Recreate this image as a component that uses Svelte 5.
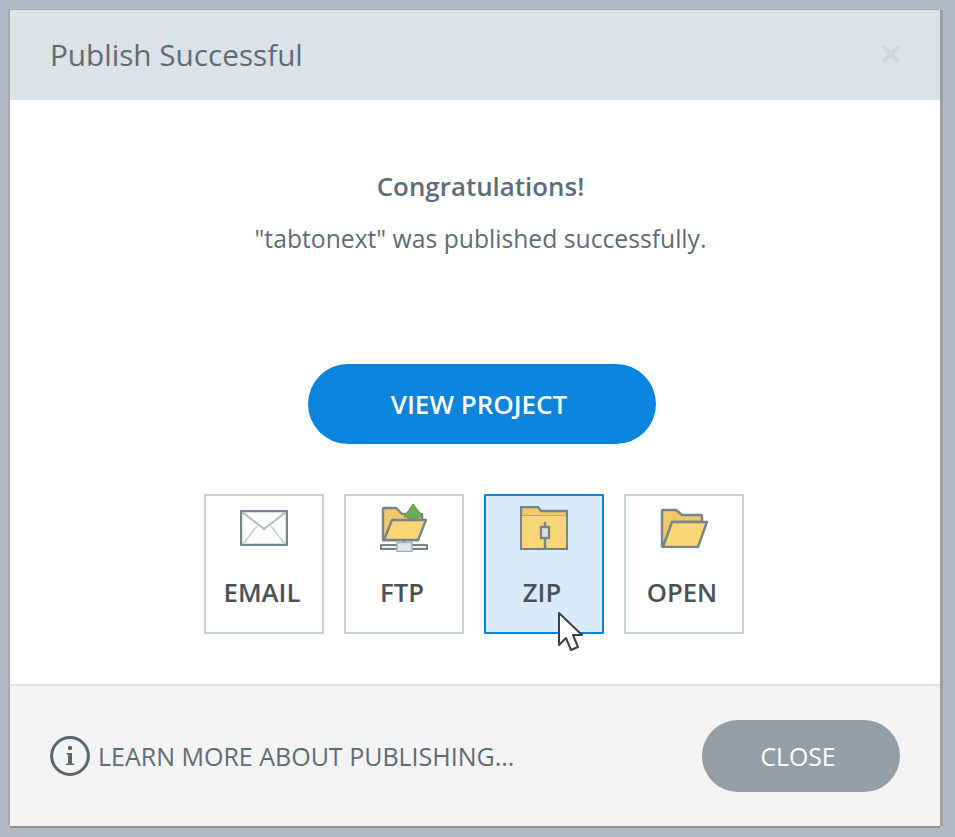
<script>
	const actions = [
		{ key: "email", label: "EMAIL" },
		{ key: "ftp", label: "FTP" },
		{ key: "zip", label: "ZIP", active: true },
		{ key: "open", label: "OPEN" },
	];
</script>

<div class="page">
	<div class="dialog">
		<header class="head">
			<h1>Publish Successful</h1>
			<svg class="x" width="20" height="20" viewBox="0 0 20 20">
				<path d="M2 2L18 18M18 2L2 18" stroke="#d3d6d9" stroke-width="4" />
			</svg>
		</header>

		<main class="body">
			<div class="top">
				<p class="congrats">Congratulations!</p>
				<p class="msg">"tabtonext" was published successfully.</p>
				<button class="view">VIEW PROJECT</button>
			</div>

			<div class="tiles">
				{#each actions as a}
					<div class="tile {a.key}" class:active={a.active}>
						<div class="icon">
							{#if a.key == "email"}
								<svg width="48" height="36" viewBox="0 0 48 36">
									<rect x="1" y="1" width="46" height="34" rx="1" fill="#fff" stroke="#76858a" stroke-width="2.4" />
									<path d="M2 2L24 19L46 2" fill="none" stroke="#b4bcbf" stroke-width="2" />
									<path d="M3 34L17 16M45 34L31 16" fill="none" stroke="#c6cdcf" stroke-width="1.5" />
								</svg>
							{:else if a.key == "ftp"}
								<svg width="48" height="48" viewBox="0 0 48 48">
									<path d="M3 36V5Q3 4 4 4H16L22 10H42V20L38 36Z" fill="#f2c869" stroke="#76858a" stroke-width="2.4" stroke-linejoin="round" />
									<path d="M33 0L43 13H38V18H28V13H24Z" fill="#6bab56" stroke="#5b9748" stroke-width="1" />
									<path d="M12 16H46L38 36H4Z" fill="#fbd677" stroke="#76858a" stroke-width="2.4" stroke-linejoin="round" />
									<path d="M24 36V41" stroke="#76858a" stroke-width="2.4" />
									<rect x="1" y="41" width="46" height="4" fill="#eef0f1" stroke="#76858a" stroke-width="2" />
									<rect x="17" y="38.5" width="15" height="9" fill="#e3e6e7" stroke="#a6b0b3" stroke-width="1.5" />
								</svg>
							{:else if a.key == "zip"}
								<svg width="48" height="44" viewBox="0 0 48 44">
									<path d="M1 43V1H18L21 5H47V43Z" fill="#f2c869" stroke="#76858a" stroke-width="2.4" stroke-linejoin="round" />
									<path d="M2 10H46V42H2Z" fill="#fbd677" />
									<path d="M2 9.5H46" stroke="#76858a" stroke-width="1" opacity="0.45" />
									<path d="M25 16V21M25 32V43" stroke="#76858a" stroke-width="2.4" />
									<rect x="21" y="21" width="8" height="11" fill="#dfe1dc" stroke="#76858a" stroke-width="2.4" />
								</svg>
							{:else}
								<svg width="48" height="40" viewBox="0 0 48 40">
									<path d="M2 38V3Q2 2 3 2H16L22 7H41Q42 7 42 8V14H13L3 38Z" fill="#f2c869" stroke="#76858a" stroke-width="2.4" stroke-linejoin="round" />
									<path d="M12 14H47L38 39H3Z" fill="#fbd677" stroke="#76858a" stroke-width="2.4" stroke-linejoin="round" />
								</svg>
							{/if}
						</div>
						<span>{a.label}</span>
						{#if a.active}
							<svg class="cursor" width="28" height="42" viewBox="0 0 28 42">
								<path d="M2 2V34L9 27L14 39L21 36L16 24H25Z" fill="#fff" stroke="#3d4144" stroke-width="2" stroke-linejoin="round" />
							</svg>
						{/if}
					</div>
				{/each}
			</div>
		</main>

		<footer class="foot">
			<div class="learn">
				<svg width="40" height="40" viewBox="0 0 40 40">
					<circle cx="20" cy="20" r="18.4" fill="none" stroke="#56666f" stroke-width="3" />
					<circle cx="20" cy="12" r="2.2" fill="#56666f" />
					<path d="M16.5 17H22V27.5H24V29H16V27.5H18V18.5H16.5Z" fill="#56666f" />
				</svg>
				<span>LEARN MORE ABOUT PUBLISHING...</span>
			</div>
			<button class="close">CLOSE</button>
		</footer>
	</div>
</div>

<style>
	:global(body) {
		margin: 0;
		background: #b3bbc6;
	}

	* {
		box-sizing: border-box;
		font-family: "Open Sans", "Noto Sans", sans-serif;
	}

	.page {
		width: 955px;
		height: 837px;
		padding: 10px 15px 11px 10px;
	}

	.dialog {
		width: 930px;
		height: 816px;
		display: flex;
		flex-direction: column;
		background: white;
		box-shadow: -2px -1px 0 #a5a9b0, 3px 0 0 #9c9fa6, 0 2px 0 #8f918f;
	}

	.head {
		height: 90px;
		flex: none;
		display: flex;
		align-items: center;
		justify-content: space-between;
		padding: 0 41px 2px 40px;
		background: #dde2e6;
	}

	h1 {
		margin: 0;
		font-size: 29.7px;
		font-weight: 400;
		color: #5d6d78;
	}

	.x {
		margin-right: -2px;
	}

	.body {
		flex: 1;
		display: flex;
		flex-direction: column;
		align-items: center;
	}

	.top {
		align-self: stretch;
		display: flex;
		flex-direction: column;
		align-items: center;
		padding-left: 11px;
	}

	.congrats {
		margin: 71px 0 0;
		height: 30px;
		line-height: 30px;
		font-size: 25.9px;
		font-weight: 600;
		color: #5d6d78;
	}

	.msg {
		margin: 23px 0 0;
		height: 30px;
		line-height: 30px;
		font-size: 24.7px;
		color: #5d6d78;
	}

	button {
		border: 0;
		color: white;
	}

	.view {
		margin-top: 110px;
		margin-left: 3px;
		padding: 0 6px 0 0;
		width: 348px;
		height: 80px;
		border-radius: 40px;
		background: #0a84dd;
		font-size: 26px;
		font-weight: 600;
	}

	.tiles {
		margin-top: 50px;
		margin-left: -2px;
		display: flex;
		gap: 20px;
	}

	.tile {
		position: relative;
		width: 120px;
		height: 140px;
		display: flex;
		flex-direction: column;
		align-items: center;
		border: 2px solid #c5d1da;
		font-size: 25.7px;
		font-weight: 600;
		color: #4a5157;
	}

	.tile.active {
		background: #d9eafa;
		border-color: #0a84dd;
	}

	.icon {
		height: 74px;
		width: 48px;
	}

	.icon svg {
		display: block;
	}

	.email .icon {
		padding-top: 14px;
	}

	.ftp .icon {
		padding-top: 8px;
	}

	.zip .icon {
		padding-top: 10px;
	}

	.open .icon {
		padding-top: 12px;
	}

	.tile span {
		line-height: 46px;
		padding-right: 4px;
	}

	.cursor {
		position: absolute;
		left: 71px;
		top: 115px;
	}

	.foot {
		height: 142px;
		flex: none;
		display: flex;
		align-items: center;
		justify-content: space-between;
		padding: 0 40px;
		border-top: 2px solid #dfe3e6;
		background: #f4f4f4;
	}

	.learn {
		display: flex;
		align-items: center;
		gap: 8px;
		font-size: 25px;
		color: #5d6d78;
	}

	.close {
		padding: 0 6px 0 0;
		width: 198px;
		height: 72px;
		border-radius: 36px;
		background: #939ea6;
		font-size: 24.8px;
	}
</style>
